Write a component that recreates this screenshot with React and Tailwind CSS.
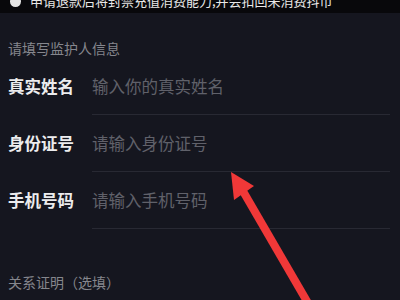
import React from "react";

const rows = [
  { label: "真实姓名", placeholder: "输入你的真实姓名" },
  { label: "身份证号", placeholder: "请输入身份证号" },
  { label: "手机号码", placeholder: "请输入手机号码" },
];

export default function App() {
  return (
    <div
      className="relative w-[400px] h-[300px] overflow-hidden bg-[#15161f]"
      style={{ fontFamily: '"Noto Sans CJK SC", "Noto Sans", sans-serif' }}
    >
      {/* notice bar, cut at top */}
      <div className="h-[13px] bg-[#08080b] overflow-hidden">
        <div className="flex items-center gap-[9px] pl-[10px] mt-[-9px] h-[20px]">
          <span className="w-[11px] h-[11px] rounded-full bg-[#e6e6e6] shrink-0" />
          <span className="text-[13px] leading-[20px] text-[#e8e8e8] whitespace-nowrap">
            申请退款后将封禁充值消费能力,并会扣回未消费抖币
          </span>
        </div>
      </div>

      <div className="pt-[25px] pl-2 text-[14px] leading-[20px] text-[#85868d]">
        请填写监护人信息
      </div>

      <div className="flex flex-col">
        {rows.map((r) => (
          <div key={r.label} className="flex">
            <div className="w-[92px] pl-2 pt-[16px] text-[16.5px] leading-[24px] font-bold text-[#ececee]">
              {r.label}
            </div>
            <div className="w-[298px] pt-[16px] pb-[16px] border-b border-[#282933] text-[16.5px] leading-[24px] text-[#60616a]">
              {r.placeholder}
            </div>
          </div>
        ))}
      </div>

      <div className="pt-[43px] pl-2 text-[14px] leading-[20px] text-[#85868d]">
        关系证明（选填）
      </div>

      {/* red annotation arrow */}
      <svg className="absolute left-0 top-0" width="400" height="300" viewBox="0 0 400 300">
        <line x1="312" y1="310" x2="240" y2="186" stroke="#f03838" strokeWidth="8" />
        <polygon points="231,172 254,186 234,200" fill="#f03838" />
      </svg>
    </div>
  );
}
